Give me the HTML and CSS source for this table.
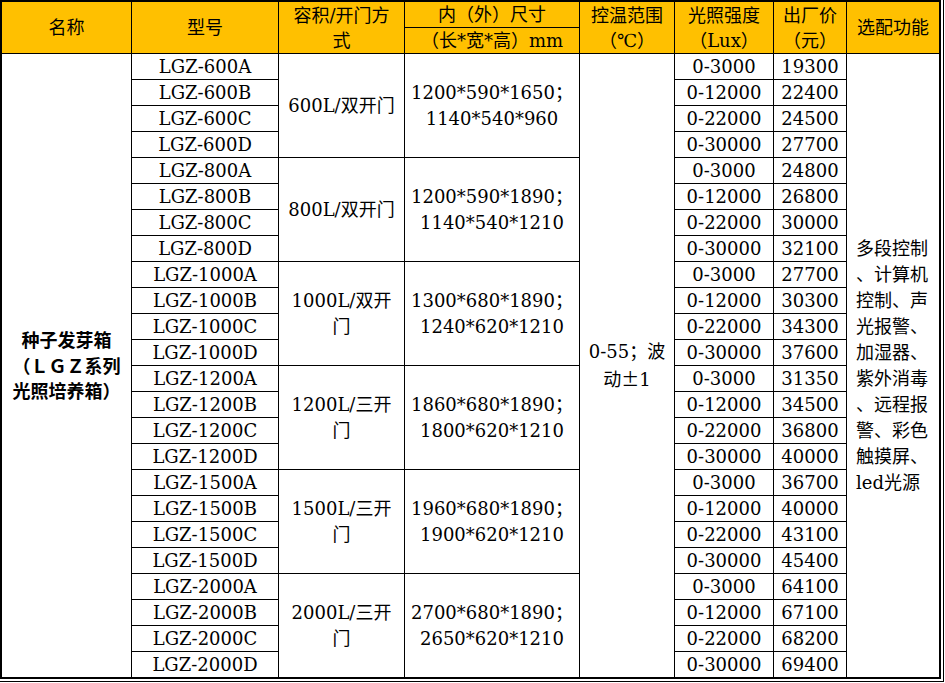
FILE: index.html
```html
<!DOCTYPE html>
<html lang="zh">
<head>
<meta charset="utf-8">
<title>种子发芽箱</title>
<link rel="stylesheet" href="styles.css">
</head>
<body>
<div class="frame">
  <div class="sheet">
    <div class="cell head span2">名称</div>
    <div class="cell head span2">型号</div>
    <div class="cell head span2">容积/开门方<br>式</div>
    <div class="cell head">内（外）尺寸</div>
    <div class="cell head span2">控温范围<br>（℃）</div>
    <div class="cell head span2">光照强度<br>（Lux）</div>
    <div class="cell head span2">出厂价<br>（元）</div>
    <div class="cell head span2">选配功能</div>
    <div class="cell head">（长*宽*高）mm</div>

    <div class="cell span24 name">种子发芽箱<br>（ＬＧＺ系列<br>光照培养箱）</div>
    <div class="cell">LGZ-600A</div>
    <div class="cell span4">600L/双开门</div>
    <div class="cell span4">1200*590*1650；<br>1140*540*960</div>
    <div class="cell span24"><p class="txt">0-55；波<br>动<span class="pm">±</span>1</p></div>
    <div class="cell">0-3000</div>
    <div class="cell">19300</div>
    <div class="cell span24 opts">多段控制<br>、计算机<br>控制、声<br>光报警、<br>加湿器、<br>紫外消毒<br>、远程报<br>警、彩色<br>触摸屏、<br>led光源</div>

    <div class="cell">LGZ-600B</div><div class="cell">0-12000</div><div class="cell">22400</div>
    <div class="cell">LGZ-600C</div><div class="cell">0-22000</div><div class="cell">24500</div>
    <div class="cell">LGZ-600D</div><div class="cell">0-30000</div><div class="cell">27700</div>

    <div class="cell">LGZ-800A</div>
    <div class="cell span4">800L/双开门</div>
    <div class="cell span4">1200*590*1890；<br>1140*540*1210</div>
    <div class="cell">0-3000</div><div class="cell">24800</div>
    <div class="cell">LGZ-800B</div><div class="cell">0-12000</div><div class="cell">26800</div>
    <div class="cell">LGZ-800C</div><div class="cell">0-22000</div><div class="cell">30000</div>
    <div class="cell">LGZ-800D</div><div class="cell">0-30000</div><div class="cell">32100</div>

    <div class="cell">LGZ-1000A</div>
    <div class="cell span4">1000L/双开<br>门</div>
    <div class="cell span4">1300*680*1890；<br>1240*620*1210</div>
    <div class="cell">0-3000</div><div class="cell">27700</div>
    <div class="cell">LGZ-1000B</div><div class="cell">0-12000</div><div class="cell">30300</div>
    <div class="cell">LGZ-1000C</div><div class="cell">0-22000</div><div class="cell">34300</div>
    <div class="cell">LGZ-1000D</div><div class="cell">0-30000</div><div class="cell">37600</div>

    <div class="cell">LGZ-1200A</div>
    <div class="cell span4">1200L/三开<br>门</div>
    <div class="cell span4">1860*680*1890；<br>1800*620*1210</div>
    <div class="cell">0-3000</div><div class="cell">31350</div>
    <div class="cell">LGZ-1200B</div><div class="cell">0-12000</div><div class="cell">34500</div>
    <div class="cell">LGZ-1200C</div><div class="cell">0-22000</div><div class="cell">36800</div>
    <div class="cell">LGZ-1200D</div><div class="cell">0-30000</div><div class="cell">40000</div>

    <div class="cell">LGZ-1500A</div>
    <div class="cell span4">1500L/三开<br>门</div>
    <div class="cell span4">1960*680*1890；<br>1900*620*1210</div>
    <div class="cell">0-3000</div><div class="cell">36700</div>
    <div class="cell">LGZ-1500B</div><div class="cell">0-12000</div><div class="cell">40000</div>
    <div class="cell">LGZ-1500C</div><div class="cell">0-22000</div><div class="cell">43100</div>
    <div class="cell">LGZ-1500D</div><div class="cell">0-30000</div><div class="cell">45400</div>

    <div class="cell">LGZ-2000A</div>
    <div class="cell span4">2000L/三开<br>门</div>
    <div class="cell span4">2700*680*1890；<br>2650*620*1210</div>
    <div class="cell">0-3000</div><div class="cell">64100</div>
    <div class="cell">LGZ-2000B</div><div class="cell">0-12000</div><div class="cell">67100</div>
    <div class="cell">LGZ-2000C</div><div class="cell">0-22000</div><div class="cell">68200</div>
    <div class="cell">LGZ-2000D</div><div class="cell">0-30000</div><div class="cell">69400</div>
  </div>
</div>
</body>
</html>
```

FILE: styles.css
```css
html, body {
  margin: 0;
  padding: 0;
  background: #ffffff;
}

.frame {
  display: inline-block;
  padding: 0 2px 2px 0;
  border-right: 1px solid #000;
  border-bottom: 1px solid #000;
}

.sheet {
  display: grid;
  grid-template-columns: 130px 147px 126px 175px 95px 99px 73px 93px;
  grid-template-rows: repeat(26, 26px);
  border-top: 2px solid #000;
  border-left: 2px solid #000;
  border-right: 1px solid #000;
  border-bottom: 1px solid #000;
  font-family: "DejaVu Serif", "Noto Sans CJK SC", serif;
  font-size: 18px;
  color: #000;
}

.cell {
  box-sizing: border-box;
  border-right: 1px solid #000;
  border-bottom: 1px solid #000;
  display: flex;
  align-items: center;
  justify-content: center;
  text-align: center;
  line-height: 26px;
  white-space: nowrap;
  overflow: hidden;
}

.txt {
  margin: 0;
}

.head {
  background: #ffc000;
  line-height: 25px;
}

.span2 { grid-row: span 2; }
.span4 { grid-row: span 4; }
.span24 { grid-row: span 24; }

.name {
  font-family: "Noto Sans CJK SC", sans-serif;
  font-weight: 700;
  line-height: 25.5px;
}

.opts {
  justify-content: flex-start;
  text-align: left;
  padding-left: 9px;
}

.pm {
  font-family: "Noto Sans CJK SC", sans-serif;
}
```
